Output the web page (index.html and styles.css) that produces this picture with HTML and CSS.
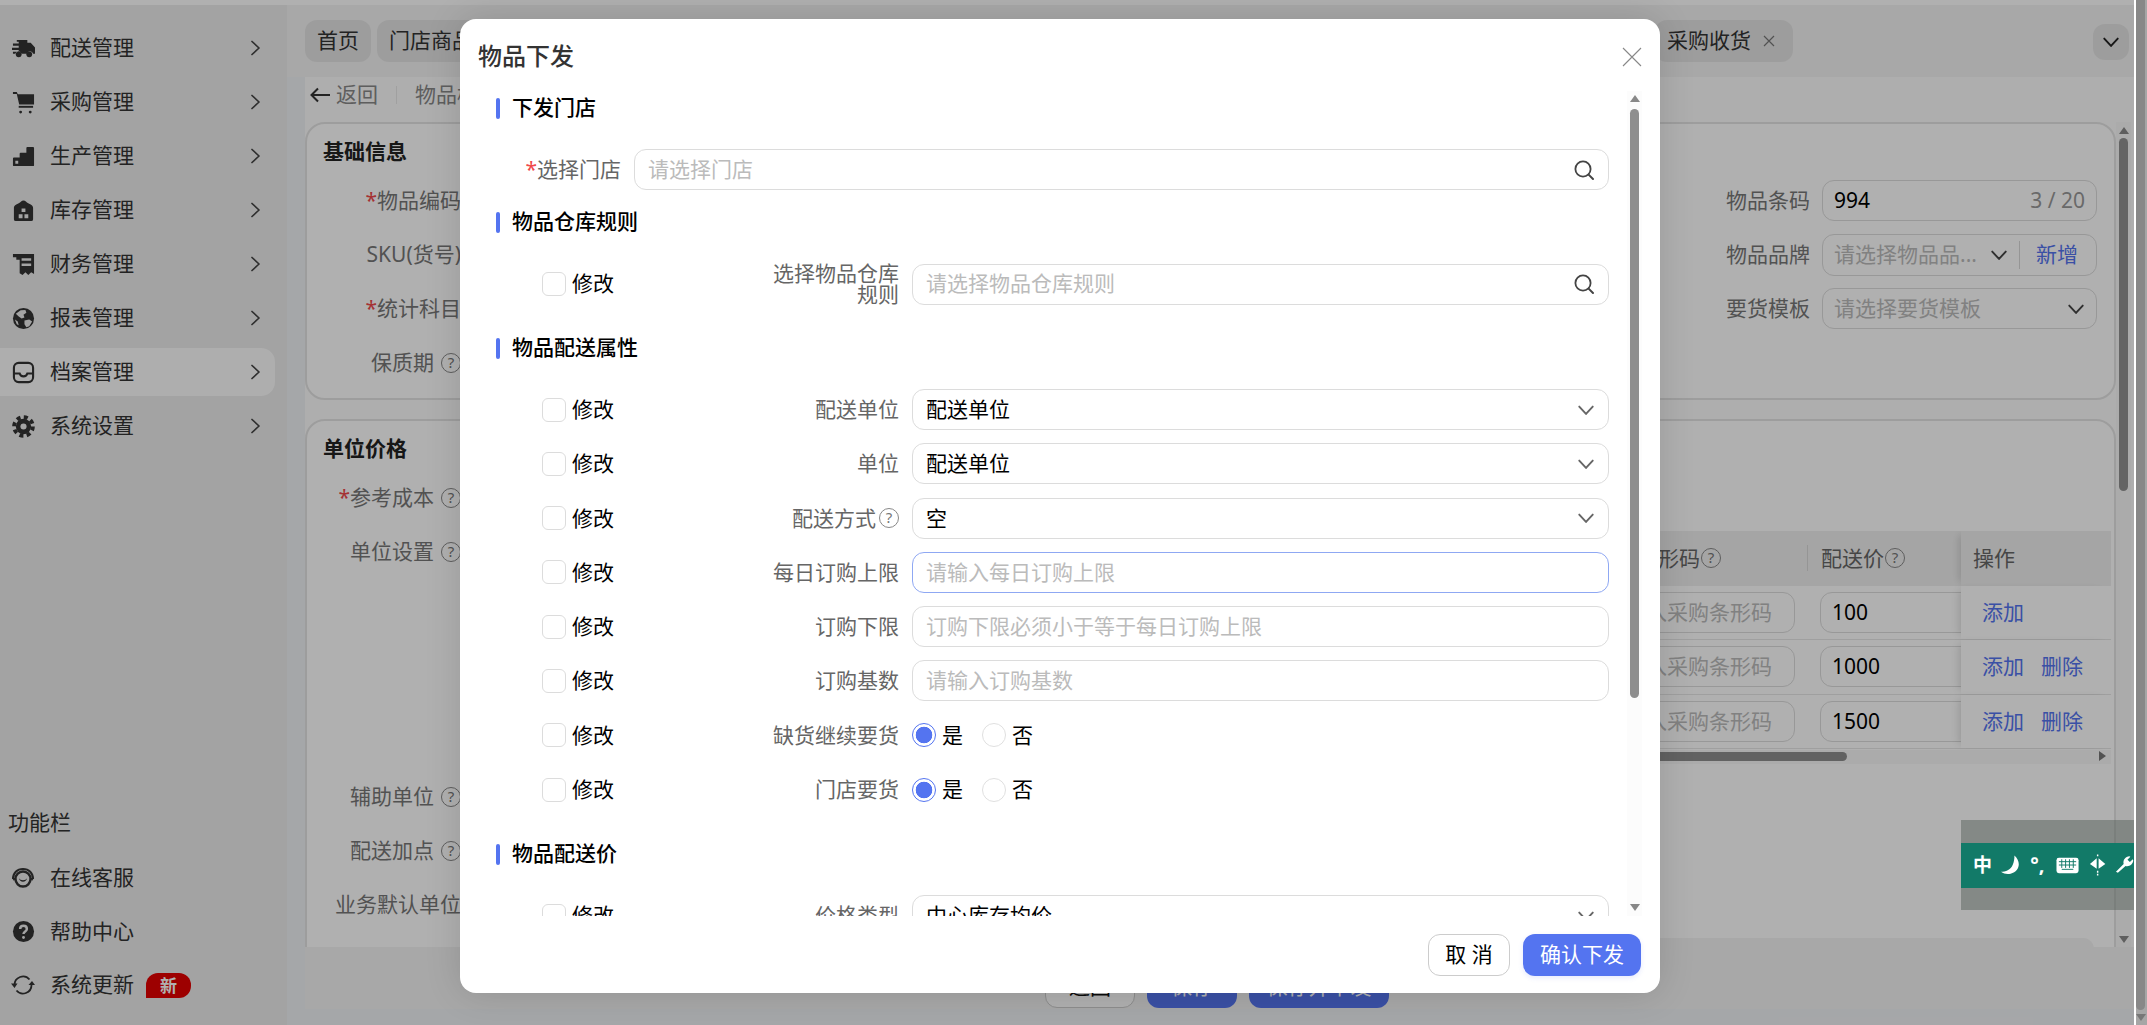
FILE: index.html
```html
<!DOCTYPE html>
<html lang="zh-CN">
<head>
<meta charset="utf-8">
<title>物品下发</title>
<link rel="stylesheet" href="styles.css">
</head>
<body>
<svg class="defs" width="0" height="0" aria-hidden="true">
  <symbol id="chev-d" viewBox="0 0 16 16"><path d="M2 5l6 6.500L14 5" fill="none" stroke="currentColor" stroke-width="1.700" stroke-linecap="round" stroke-linejoin="round"/></symbol>
  <symbol id="chev-r" viewBox="0 0 16 16"><path d="M5 1.500L12 8l-7 6.500" fill="none" stroke="currentColor" stroke-width="1.700" stroke-linecap="round" stroke-linejoin="round"/></symbol>
  <symbol id="search" viewBox="0 0 22 22"><circle cx="10" cy="10" r="7.600" fill="none" stroke="currentColor" stroke-width="1.800"/><path d="M15.600 15.600L20 20" stroke="currentColor" stroke-width="2" stroke-linecap="round"/></symbol>
</svg>
<div class="page">
  <div class="topstrip"></div>
  <div class="app">
    <aside class="sidebar">
      <nav class="menu">
        <a class="menu-item"><svg class="mi" viewBox="0 0 24 24"><path d="M5 3h11v3h3.500l4.500 5v6.500h-2a3.300 3.300 0 0 0-6.500 0H10a3.300 3.300 0 0 0-6.500 0H1v-2h6v-2H0v-2.300h7V9H1V6.800h6V5H5z"/><circle cx="7" cy="18" r="3"/><circle cx="18" cy="18" r="3"/></svg><span>配送管理</span><svg class="mc"><use href="#chev-r"/></svg></a>
        <a class="menu-item"><svg class="mi" viewBox="0 0 24 24"><path d="M1 1h4l1 2.500h17v10.500H7.500L5 3H1z"/><path d="M7 15.500h15v2H7z"/><circle cx="9" cy="22" r="1.500"/><circle cx="19" cy="22" r="1.500"/></svg><span>采购管理</span><svg class="mc"><use href="#chev-r"/></svg></a>
        <a class="menu-item"><svg class="mi" viewBox="0 0 24 24"><path fill-rule="evenodd" d="M1 14a1 1 0 0 1 1-1h6V9a1 1 0 0 1 1-1h6V3a1 1 0 0 1 1-1h6a1 1 0 0 1 1 1v18a1 1 0 0 1-1 1H2a1 1 0 0 1-1-1zM3.500 16.500v3h3v-3z"/></svg><span>生产管理</span><svg class="mc"><use href="#chev-r"/></svg></a>
        <a class="menu-item"><svg class="mi" viewBox="0 0 24 24"><path fill-rule="evenodd" d="M12 1.500c2 0 3 2 5 3 2 1.200 5 2 5 5V21a2 2 0 0 1-2 2H4a2 2 0 0 1-2-2V9.500c0-3 3-3.800 5-5 2-1 3-3 5-3zM10 10v3.500h4V10zM7 16v4h4v-4zM13 16v4h4v-4z"/></svg><span>库存管理</span><svg class="mc"><use href="#chev-r"/></svg></a>
        <a class="menu-item"><svg class="mi" viewBox="0 0 24 24"><path fill-rule="evenodd" d="M1 1h22v21l-3-2-3 3-3-3-3 3-3-2V7H4.500V4.500H1zM10 5.500v2.500h10V5.500zM10 11v2.500h10V11z"/></svg><span>财务管理</span><svg class="mc"><use href="#chev-r"/></svg></a>
        <a class="menu-item"><svg class="mi" viewBox="0 0 24 24"><circle cx="12" cy="12" r="11"/><path class="hole" d="M4 7l5-3.500 5-.5 1 3-3 2 1 3-3 1-3-2zM13 14l5-1 3 2-3 5-3 1-2-3zM3 13l3 2 1 4-2-1z"/></svg><span>报表管理</span><svg class="mc"><use href="#chev-r"/></svg></a>
        <a class="menu-item active"><svg class="mi" viewBox="0 0 24 24"><rect x="2" y="2" width="20" height="20" rx="5" fill="none" stroke="currentColor" stroke-width="2.200"/><path d="M2 13h6c.5 2 2 3 4 3s3.500-1 4-3h6" fill="none" stroke="currentColor" stroke-width="2.200"/></svg><span>档案管理</span><svg class="mc"><use href="#chev-r"/></svg></a>
        <a class="menu-item"><svg class="mi" viewBox="0 0 24 24"><circle cx="12" cy="12" r="8"/><circle cx="12" cy="12" r="9.800" fill="none" stroke="currentColor" stroke-width="4" stroke-dasharray="4.200 3.500"/><circle class="hole" cx="12" cy="12" r="3.200"/></svg><span>系统设置</span><svg class="mc"><use href="#chev-r"/></svg></a>
      </nav>
      <div class="tools">
        <div class="tools-title">功能栏</div>
        <a class="menu-item tool"><svg class="mi mi-wide" viewBox="0 0 24 24"><path d="M2 13c0-6 4-10 10-10s10 4 10 10" fill="none" stroke="currentColor" stroke-width="2"/><circle cx="12" cy="13" r="7.500" fill="none" stroke="currentColor" stroke-width="2.400"/><path d="M8 12c1 3 7 3 8 0-.5 5-7.500 5-8 0z"/><path d="M1 12l2 3 2-3zM19 12l2 3 2-3z"/></svg><span>在线客服</span></a>
        <a class="menu-item tool"><svg class="mi" viewBox="0 0 24 24"><circle cx="12" cy="12" r="11"/><path class="hole-s" d="M8.500 9.500c0-4.500 7-4.500 7 0 0 2.500-3.500 2.500-3.500 5"/><circle class="hole" cx="12" cy="18.300" r="1.500"/></svg><span>帮助中心</span></a>
        <a class="menu-item tool"><svg class="mi mi-wide" viewBox="0 0 24 24"><path d="M3.500 12a8.500 8.500 0 0 1 15-5.500M20.500 12a8.500 8.500 0 0 1-15 5.500" fill="none" stroke="currentColor" stroke-width="1.800"/><path d="M0 10.500h6.500L3.500 15zM17.500 12h6.500l-3-4z"/></svg><span>系统更新</span><b class="badge">新</b></a>
      </div>
    </aside>

    <main class="main">
      <div class="tabs">
        <div class="tab">首页</div>
        <div class="tab tab-next">门店商品</div>
        <div class="tab">采购收货<svg class="tab-x" viewBox="0 0 12 12"><path d="M1 1l10 10M11 1L1 11" stroke="currentColor" stroke-width="1.200"/></svg></div>
        <div class="tab-more"><svg class="ic14"><use href="#chev-d"/></svg></div>
      </div>
      <div class="body">
        <div class="panel">
          <div class="backbar">
            <svg class="back-arrow" viewBox="0 0 20 16"><path d="M8 1.500L1.500 8 8 14.500M2 8h18" fill="none" stroke="currentColor" stroke-width="2"/></svg>
            <span>返回</span><i class="vline"></i><span>物品档案</span>
          </div>
          <div class="scroller">
            <div class="cards">
              <section class="card card-basic">
                <h3 class="card-title">基础信息</h3>
                <div class="frow">
                  <label class="flabel"><em>*</em>物品编码</label>
                  <div class="rfield"><label class="rlabel">物品条码</label><div class="box"><span class="val">994</span><span class="count">3 / 20</span></div></div>
                </div>
                <div class="frow">
                  <label class="flabel">SKU(货号)</label>
                  <div class="rfield"><label class="rlabel">物品品牌</label><div class="box box-tall"><span class="ph">请选择物品品...</span><svg class="ic14 arr"><use href="#chev-d"/></svg><i class="box-div"></i><a class="link add">新增</a></div></div>
                </div>
                <div class="frow">
                  <label class="flabel"><em>*</em>统计科目</label>
                  <div class="rfield"><label class="rlabel">要货模板</label><div class="box"><span class="ph">请选择要货模板</span><svg class="ic14 arr-end"><use href="#chev-d"/></svg></div></div>
                </div>
                <div class="frow">
                  <label class="flabel">保质期<i class="help">?</i></label>
                </div>
              </section>

              <section class="card card-unit">
                <h3 class="card-title">单位价格</h3>
                <div class="frow"><label class="flabel"><em>*</em>参考成本<i class="help">?</i></label></div>
                <div class="frow">
                  <label class="flabel">单位设置<i class="help">?</i></label>
                  <div class="table">
                    <div class="t-scroll">
                      <div class="t-row t-head">
                        <div class="t-a">采购条形码<i class="help">?</i></div>
                        <div class="t-b">配送价<i class="help">?</i></div>
                        <div class="t-op">操作</div>
                      </div>
                      <div class="t-row">
                        <div class="t-a"><div class="box box-cell"><span class="ph">请输入采购条形码</span></div></div>
                        <div class="t-b"><div class="box box-price"><span class="val">100</span></div></div>
                        <div class="t-op"><a class="link">添加</a></div>
                      </div>
                      <div class="t-row">
                        <div class="t-a"><div class="box box-cell"><span class="ph">请输入采购条形码</span></div></div>
                        <div class="t-b"><div class="box box-price"><span class="val">1000</span></div></div>
                        <div class="t-op"><a class="link">添加</a><a class="link">删除</a></div>
                      </div>
                      <div class="t-row">
                        <div class="t-a"><div class="box box-cell"><span class="ph">请输入采购条形码</span></div></div>
                        <div class="t-b"><div class="box box-price"><span class="val">1500</span></div></div>
                        <div class="t-op"><a class="link">添加</a><a class="link">删除</a></div>
                      </div>
                    </div>
                    <div class="t-hbar"><i class="t-hthumb"></i><i class="t-harrow"></i></div>
                  </div>
                </div>
                <div class="frow"><label class="flabel">辅助单位<i class="help">?</i></label></div>
                <div class="frow"><label class="flabel">配送加点<i class="help">?</i></label></div>
                <div class="frow"><label class="flabel">业务默认单位</label></div>
                <div class="card-peek"></div>
              </section>
            </div>
            <div class="vbar"><i class="arrow-up"></i><i class="vthumb"></i><i class="spacer"></i><i class="arrow-down"></i></div>
          </div>
          <div class="footer">
            <button class="btn btn-plain">返回</button>
            <button class="btn btn-primary">保存</button>
            <button class="btn btn-primary">保存并下发</button>
          </div>
        </div>
      </div>
    </main>
  </div>

  <div class="mask"></div>

  <div class="modal">
    <header class="m-head">
      <h2>物品下发</h2>
      <svg class="m-close" viewBox="0 0 20 20"><path d="M1 1l18 18M19 1L1 19" stroke="currentColor" stroke-width="1.100"/></svg>
    </header>
    <div class="m-body">
      <div class="m-scroll">
        <h4 class="sec">下发门店</h4>
        <div class="row row-store">
          <label class="lab"><em>*</em>选择门店</label>
          <div class="ctl"><span class="ph">请选择门店</span><svg class="ic-search"><use href="#search"/></svg></div>
        </div>

        <h4 class="sec sec-mid">物品仓库规则</h4>
        <div class="row">
          <label class="chk"><i></i>修改</label>
          <label class="lab lab-wrap">选择物品仓库规则</label>
          <div class="ctl"><span class="ph">请选择物品仓库规则</span><svg class="ic-search"><use href="#search"/></svg></div>
        </div>

        <h4 class="sec sec-next">物品配送属性</h4>
        <div class="rows">
          <div class="row">
            <label class="chk"><i></i>修改</label>
            <label class="lab">配送单位</label>
            <div class="ctl"><span class="val">配送单位</span><svg class="ic14 c-arrow"><use href="#chev-d"/></svg></div>
          </div>
          <div class="row">
            <label class="chk"><i></i>修改</label>
            <label class="lab">单位</label>
            <div class="ctl"><span class="val">配送单位</span><svg class="ic14 c-arrow"><use href="#chev-d"/></svg></div>
          </div>
          <div class="row">
            <label class="chk"><i></i>修改</label>
            <label class="lab">配送方式<i class="help help-m">?</i></label>
            <div class="ctl"><span class="val">空</span><svg class="ic14 c-arrow"><use href="#chev-d"/></svg></div>
          </div>
          <div class="row">
            <label class="chk"><i></i>修改</label>
            <label class="lab">每日订购上限</label>
            <div class="ctl ctl-focus"><span class="ph">请输入每日订购上限</span></div>
          </div>
          <div class="row">
            <label class="chk"><i></i>修改</label>
            <label class="lab">订购下限</label>
            <div class="ctl"><span class="ph">订购下限必须小于等于每日订购上限</span></div>
          </div>
          <div class="row">
            <label class="chk"><i></i>修改</label>
            <label class="lab">订购基数</label>
            <div class="ctl"><span class="ph">请输入订购基数</span></div>
          </div>
          <div class="row">
            <label class="chk"><i></i>修改</label>
            <label class="lab">缺货继续要货</label>
            <div class="radios"><label class="radio on"><i></i>是</label><label class="radio"><i></i>否</label></div>
          </div>
          <div class="row">
            <label class="chk"><i></i>修改</label>
            <label class="lab">门店要货</label>
            <div class="radios"><label class="radio on"><i></i>是</label><label class="radio"><i></i>否</label></div>
          </div>
        </div>

        <h4 class="sec sec-last">物品配送价</h4>
        <div class="row">
          <label class="chk"><i></i>修改</label>
          <label class="lab">价格类型</label>
          <div class="ctl"><span class="val">中心库存均价</span><svg class="ic14 c-arrow"><use href="#chev-d"/></svg></div>
        </div>
      </div>
      <div class="m-bar"><i class="arrow-up"></i><i class="m-thumb"></i><i class="spacer"></i><i class="arrow-down"></i></div>
    </div>
    <footer class="m-foot">
      <button class="btn m-cancel">取 消</button>
      <button class="btn m-ok">确认下发</button>
    </footer>
  </div>

  <div class="ime">
    <div class="ime-strip">
      <span class="ime-zh">中</span>
      <svg class="ime-i" width="21" height="22" viewBox="0 0 21 22"><path d="M14 1c7 6 6 17-4 19-4 .8-7 0-10-2 2 0 5 0 7-1.500C12 14 14 8 14 1z" fill="#fff"/></svg>
      <span class="ime-p">°,</span>
      <svg class="ime-i" width="24" height="17" viewBox="0 0 24 17"><rect x=".5" y=".5" width="23" height="16" rx="2.500" fill="#fff"/><path d="M3 4.500h18M3 8h18M6 12.500h12M6 2v9M10 2v9M14 2v9M18 2v9" stroke="#127a68" stroke-width="1"/></svg>
      <svg class="ime-i" width="18" height="22" viewBox="0 0 18 22"><path d="M8 4v11L1 10zM10 4l7 6-7 5z" fill="#fff"/><path d="M9 0v2M9 17v2M9 20v2" stroke="#fff" stroke-width="1.500"/></svg>
      <svg class="ime-i" width="20" height="20" viewBox="0 0 20 20"><path d="M1 17l8-8c-1-4 2-8 6-8l1 .5-3 3 2.500 2.500 3-3 .5 1c0 4-4 7-8 6l-8 7z" fill="#fff"/></svg>
    </div>
  </div>
</div>
<div class="pagebar"><i class="pb-thumb"></i><i class="arrow-down pb-arrow"></i></div>
</body>
</html>
```
FILE: styles.css
```css
* { box-sizing: border-box; }
html, body { height: 100%; }
body {
  margin: 0;
  display: flex;
  overflow: hidden;
  background: #fff;
  color: #333;
  font: 21px/1.2 "Noto Sans", "Noto Sans CJK SC", sans-serif;
}
.defs { position: absolute; }
i { font-style: normal; }
em { font-style: normal; color: #f0484a; }
a { display: inline-block; }

.page { position: relative; flex: 1; min-width: 0; display: flex; flex-direction: column; height: 100vh; overflow: hidden; }
.topstrip { height: 5px; background: #fff; flex: none; }
.app { flex: 1; min-height: 0; display: flex; }

/* sidebar */
.sidebar { width: 287px; flex: none; background: #ececec; display: flex; flex-direction: column; justify-content: space-between; }
.menu { padding-top: 19px; display: flex; flex-direction: column; gap: 6px; }
.menu-item { height: 48px; width: 275px; display: flex; align-items: center; padding-left: 12px; border-radius: 0 14px 14px 0; color: #333; font-size: 21px; }
.menu-item.active { background: #fcfcfc; }
.menu-item > span { margin-left: 15px; flex: 1; }
.mi { width: 23px; height: 23px; fill: currentColor; color: #333; flex: none; }
.mi-wide { width: 24px; height: 24px; margin-left: -1px; }
.hole { fill: #ececec; }
.hole-s { fill: none; stroke: #ececec; stroke-width: 2.6; }
.mc { width: 16px; height: 18px; color: #444; margin-right: 12px; flex: none; }
.tools { padding-bottom: 16px; display: flex; flex-direction: column; gap: 5.5px; }
.tools-title { padding-left: 8px; font-size: 21px; height: 34px; line-height: 34px; margin-bottom: 10px; color: #333; }
.tool > span { flex: none; }
.badge { margin-left: 12px; width: 45px; height: 25px; background: #e40000; color: #fff; font-size: 17px; line-height: 25px; text-align: center; border-radius: 12px 12px 12px 0; font-weight: 700; }

/* main */
.main { flex: 1; min-width: 0; display: flex; flex-direction: column; }
.tabs { height: 72px; flex: none; background: #f3f3f3; display: flex; align-items: flex-start; padding: 15px 5px 0 18px; gap: 6px; }
.tab { height: 42px; padding: 0 12px; background: #e4e4e4; border-radius: 12px; display: flex; align-items: center; font-size: 21px; color: #333; flex: none; }
.tab-next { width: 120px; margin-right: auto; }
.tab-x { width: 12px; height: 12px; margin: 0 6px 0 12px; color: #777; }
.tab-more { width: 36px; height: 36px; margin: 4px 0 0 294px; background: #e4e4e4; border-radius: 12px; display: flex; align-items: center; justify-content: center; color: #222; flex: none; }
.ic14 { width: 18px; height: 18px; flex: none; }

.body { flex: 1; min-height: 0; background: #f0f2f5; padding: 0 0 16px 18px; display: flex; }
.panel { flex: 1; min-width: 0; display: flex; flex-direction: column; background: #f3f3f3; }
.backbar { height: 45px; flex: none; background: #fcfcfc; display: flex; align-items: center; padding: 0 0 10px 5px; color: #888; font-size: 21px; }
.back-arrow { width: 20px; height: 16px; color: #333; margin-right: 6px; }
.vline { width: 1px; height: 18px; background: #e8e8e8; margin: 0 18px; }
.scroller { height: 825px; flex: none; display: flex; background: #fcfcfc; overflow: hidden; }
.cards { width: 1811px; flex: none; display: flex; flex-direction: column; gap: 19px; }
.card { background: #fff; border: 2px solid #e4e4e4; border-radius: 20px; padding: 10px 17px 0 16px; flex: none; }
.card-basic { height: 278px; }
.card-unit { border-bottom-left-radius: 0; border-bottom-right-radius: 0; height: 530px; padding-right: 0; }
.card-title { margin: 0 0 12px; font-size: 21px; height: 34px; line-height: 34px; font-weight: 700; color: #222; }
.frow { display: flex; align-items: flex-start; min-height: 42px; margin-bottom: 12px; }
.flabel { width: 138px; flex: none; height: 42px; display: flex; align-items: center; justify-content: flex-end; color: #777; font-size: 21px; white-space: nowrap; }
.help { width: 20px; height: 20px; border: 1.5px solid #888; border-radius: 50%; font-size: 15px; line-height: 17px; text-align: center; color: #777; margin-left: 7px; flex: none; display: inline-block; }
.rfield { margin-left: auto; width: 371px; display: flex; align-items: center; }
.rlabel { width: 83px; margin-right: 13px; color: #777; font-size: 21px; white-space: nowrap; flex: none; }
.box { flex: 1; min-width: 0; height: 41px; border: 1.5px solid #dcdcdc; border-radius: 12px; display: flex; align-items: center; padding: 0 11px; background: #fff; }
.box-tall { height: 42px; }
.val { color: #000; font-size: 21px; white-space: nowrap; }
.ph { color: #bbb; font-size: 21px; white-space: nowrap; }
.count { margin-left: auto; color: #999; font-size: 21px; }
.arr { margin-left: 13px; color: #444; }
.arr-end { margin-left: auto; color: #444; }
.box-div { width: 1px; height: 28px; background: #d8d8d8; margin: 0 16px 0 11px; flex: none; }
.link { color: #5474f0; font-size: 21px; }
.add { white-space: nowrap; }
.card-peek { height: 11px; margin: 9px 20px 0 170px; background: #f4f4f4; border-radius: 0 16px 0 0; }

/* table */
.table { width: 1638px; margin: 0 0 0 12px; height: 233px; display: flex; flex-direction: column; overflow: hidden; flex: none; }
.t-scroll { flex: 1; min-height: 0; }
.t-row { display: grid; grid-template-columns: 1fr 154px 150px; height: 54.6px; border-bottom: 1.5px solid #e6e6e6; align-items: center; }
.t-head { height: 54.5px; background: #f0f0f0; color: #666; font-size: 21px; border-bottom: 0; }
.t-a { display: flex; align-items: center; justify-content: flex-end; padding-right: 12px; height: 100%; }
.t-head .t-a { padding-right: 86px; }
.t-b { display: flex; align-items: center; height: 100%; padding-left: 13px; overflow: hidden; }
.t-head .t-b { border-left: 1.5px solid #d8d8d8; height: 26px; overflow: visible; white-space: nowrap; }
.t-head .help { margin-left: 1px; }
.t-op { display: flex; align-items: center; gap: 17px; height: 100%; padding-left: 21px; background: #fff; box-shadow: -6px 0 8px -4px rgba(0,0,0,.14); }
.t-head .t-op { background: #f0f0f0; padding-left: 12px; }
.box-cell { flex: none; width: 203px; }
.box-price { flex: none; width: 220px; height: 41px; border-radius: 12px; }
.t-hbar { height: 14px; flex: none; background: #f8f8f8; display: flex; align-items: center; position: relative; padding-bottom: 2px; }
.t-hthumb { width: 538px; margin-left: 836px; height: 9px; border-radius: 5px; background: #8e8e8e; }
.t-harrow { position: absolute; right: 5px; top: 1px; border: 5px solid transparent; border-left: 7px solid #777; border-right: 0; }

/* inner scrollbars */
.arrow-up { width: 0; height: 0; border: 5px solid transparent; border-bottom: 7px solid currentColor; border-top: 0; flex: none; }
.arrow-down { width: 0; height: 0; border: 5px solid transparent; border-top: 7px solid currentColor; border-bottom: 0; flex: none; }
.spacer { flex: 1; }
.vbar { width: 15px; flex: none; display: flex; flex-direction: column; align-items: center; padding: 5px 0 4px; color: #888; background: #f8f8f8; }
.vthumb { width: 9px; height: 353px; margin-top: 4px; border-radius: 5px; background: #929292; }

.footer { flex: 1; display: flex; align-items: flex-end; justify-content: flex-start; gap: 12px; padding: 0 0 1px 740px; background: #f3f3f3; }
.btn { height: 42px; border: 0; border-radius: 12px; font: inherit; font-size: 21px; padding: 0; }
.btn-plain { width: 90px; background: #fff; border: 1.5px solid #ccc; color: #111; }
.btn-primary { background: #5474f0; color: #fff; width: 90px; }
.btn-primary:last-child { width: 140px; }

/* mask & modal */
.mask { position: absolute; inset: 0; background: rgba(0,0,0,.31); }
.modal { position: absolute; left: 460px; top: 19px; width: 1200px; height: 974px; background: #fff; border-radius: 16px; display: flex; flex-direction: column; box-shadow: 0 0 36px rgba(0,0,0,.14); }
.m-head { height: 72px; flex: none; display: flex; align-items: center; justify-content: space-between; padding: 3px 18px 0 18px; }
.m-head h2 { margin: 0; font-size: 24px; font-weight: 500; color: #333; }
.m-close { width: 20px; height: 20px; color: #888; }
.m-body { height: 825px; flex: none; position: relative; overflow: hidden; }
.m-scroll { padding-left: 36px; width: 1149px; }
.sec { height: 34px; margin: 0 0 24px; font-size: 21px; font-weight: 500; color: #000; display: flex; align-items: center; gap: 12px; }
.sec::before { content: ""; width: 4px; height: 21px; border-radius: 2px; background: #5474f0; flex: none; }
.sec-mid { margin-top: 15px; }
.sec-next { margin-top: 27px; }
.sec-last { margin-top: 27px; }
.rows { display: flex; flex-direction: column; gap: 13.3px; }
.row { display: grid; grid-template-columns: 264px 139px 710px; align-items: center; height: 41px; }
.row > .ctl, .row > .radios { margin-left: 13px; width: 697px; }
.row-store { grid-template-columns: 125px 988px; }
.row-store > .ctl { width: 975px; }
.chk { padding-left: 46px; display: flex; align-items: center; gap: 6px; color: #000; font-size: 21px; }
.chk i { width: 24px; height: 24px; border: 1.5px solid #dcdcdc; border-radius: 6px; background: #fff; flex: none; }
.lab { display: flex; align-items: center; justify-content: flex-end; color: #666; font-size: 21px; line-height: 21px; text-align: right; }
.lab-wrap { display: block; }
.help-m { margin-left: 3px; }
.ctl { height: 41px; border: 1.5px solid #dcdcdc; border-radius: 12px; display: flex; align-items: center; padding: 0 13px; background: #fff; }
.ctl-focus { border-color: #8fa8f3; }
.ic-search { width: 22px; height: 22px; margin-left: auto; color: #444; }
.c-arrow { margin-left: auto; color: #666; }
.radios { display: flex; align-items: center; gap: 19px; color: #000; font-size: 21px; }
.radio { display: flex; align-items: center; gap: 6px; }
.radio i { width: 24px; height: 24px; border-radius: 50%; border: 1.5px solid #e0e0e0; background: #fff; flex: none; }
.radio.on i { border-color: #5474f0; background: radial-gradient(circle, #5474f0 0 8px, #fff 8.6px); }
.m-bar { position: absolute; right: 18px; top: 0; bottom: 0; width: 15px; display: flex; flex-direction: column; align-items: center; padding: 4px 0 5px; background: #fcfcfc; color: #888; }
.m-thumb { width: 9px; height: 589px; margin-top: 7px; border-radius: 5px; background: #8e8e8e; }
.m-foot { flex: 1; display: flex; justify-content: flex-end; align-items: flex-start; gap: 13px; padding: 18px 19px 0 0; }
.m-cancel { width: 82px; background: #fff; border: 1.5px solid #ccc; color: #000; font-size: 21px; }
.m-ok { width: 118px; background: #5474f0; color: #fff; box-shadow: 0 2px 5px rgba(84,116,240,.15); }

/* floating IME bar */
.ime { position: absolute; right: 0; top: 820px; width: 173px; height: 90px; background: rgba(80,90,85,.45); display: flex; align-items: center; }
.ime-strip { width: 100%; height: 45px; background: #127a68; display: flex; align-items: center; gap: 9px; padding-left: 12px; color: #fff; }
.ime-zh { font-size: 19px; font-weight: 700; }
.ime-p { font-size: 20px; font-weight: 700; width: 18px; line-height: 1; }

/* outer page scrollbar */
.pagebar { width: 13px; flex: none; height: 100vh; background: #a6a6a6; border-left: 2px solid #fff; display: flex; flex-direction: column; align-items: flex-start; color: #777; }
.pb-thumb { width: 9px; height: 1010px; background: #888; border-radius: 0 0 5px 5px; }
.pb-arrow { margin: 4px 0 0 0; }
```
